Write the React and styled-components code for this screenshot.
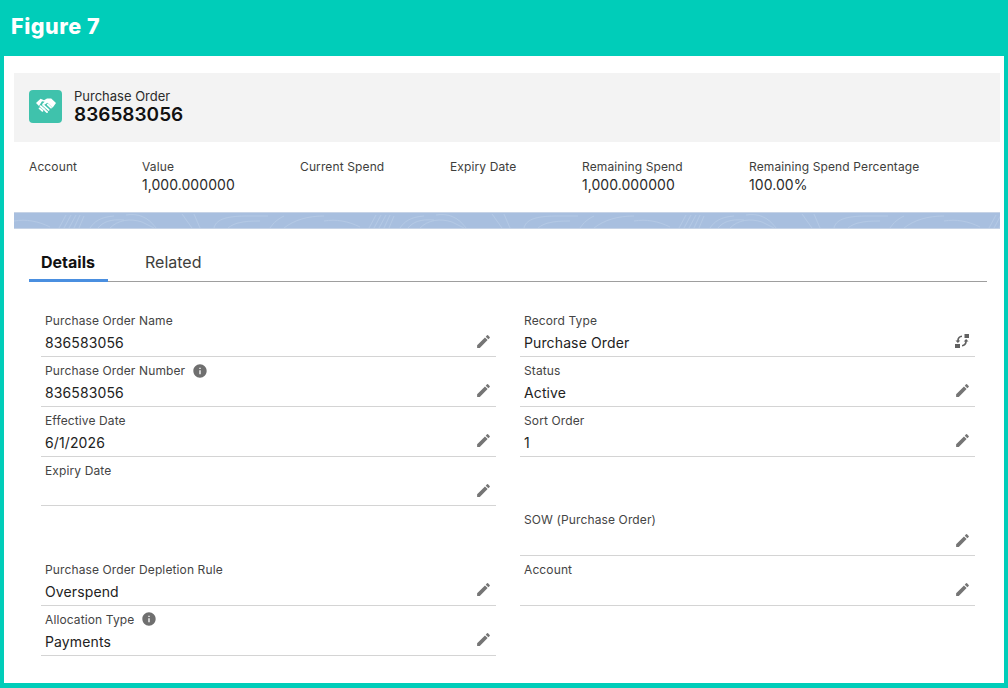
import React from 'react';
import styled, { createGlobalStyle } from 'styled-components';
import { MdEdit, MdInfo } from 'react-icons/md';

const GlobalStyle = createGlobalStyle`
  html, body {
    margin: 0;
    padding: 0;
    background: #00cdb9;
  }
  * {
    box-sizing: border-box;
  }
`;

const Frame = styled.div`
  width: 1008px;
  height: 688px;
  display: flex;
  flex-direction: column;
  padding: 0 4px 5px;
  background: #00cdb9;
  font-family: Inter, "Liberation Sans", sans-serif;
  overflow: hidden;
`;

const FigureBar = styled.div`
  height: 56px;
  flex: none;
  display: flex;
  align-items: flex-start;
  padding: 13px 0 0 7px;
  color: #fff;
  font-size: 21.5px;
  font-weight: 800;
  letter-spacing: 0.55px;
  line-height: 26px;
`;

const Sheet = styled.div`
  flex: 1;
  padding: 17px 4px 0 10px;
  background: #fff;
`;

const RecordHeader = styled.div`
  height: 69px;
  display: flex;
  align-items: center;
  gap: 12px;
  padding: 0 0 3px 15px;
  background: #f3f3f3;
`;

const RecordIcon = styled.div`
  width: 33px;
  height: 33px;
  display: flex;
  align-items: center;
  justify-content: center;
  border-radius: 4px;
  background: #3fc2ac;
`;

const RecordTitle = styled.div`
  display: flex;
  flex-direction: column;
  color: #2b2b2b;
  font-size: 13px;
  line-height: 16px;
  strong {
    color: #111;
    font-size: 19px;
    font-weight: 600;
    line-height: 21px;
  }
`;

const Highlights = styled.div`
  height: 70px;
  display: grid;
  grid-template-columns: 113px 158px 150px 132px 167px 1fr;
  padding: 17px 0 0 15px;
`;

const Stat = styled.div`
  display: flex;
  flex-direction: column;
  gap: 2px;
  color: #3e3e3c;
  font-size: 12px;
  letter-spacing: 0.12px;
  line-height: 15px;
  span:last-child:not(:first-child) {
    font-size: 14px;
    letter-spacing: 0.05px;
    line-height: 18px;
    color: #2b2b2b;
  }
`;

const Band = styled.div`
  height: 17px;
  background: #a8bfdf;
  border-top: 1px solid #c6d3e6;
  border-bottom: 1px solid #c6d3e6;
  overflow: hidden;
  svg {
    display: block;
    margin-top: -1px;
  }
`;

const Tabs = styled.div`
  height: 53px;
  margin: 0 13px 0 15px;
  display: flex;
  align-items: flex-end;
  border-bottom: 1px solid #9e9e9e;
`;

const Tab = styled.div`
  height: 32px;
  width: ${(p) => p.$width}px;
  margin-bottom: -1px;
  padding-left: ${(p) => p.$pad}px;
  border-bottom: 3px solid ${(p) => (p.$active ? '#4a8fe0' : 'transparent')};
  color: ${(p) => (p.$active ? '#111' : '#3e3e3c')};
  font-size: 16px;
  font-weight: ${(p) => (p.$active ? 700 : 400)};
  line-height: 24px;
`;

const FieldGrid = styled.div`
  display: grid;
  grid-template-columns: 455px 455px;
  grid-auto-rows: 49.75px;
  column-gap: 24px;
  padding: 25.4px 0 0 27px;
`;

const Field = styled.div`
  position: relative;
  padding: 6px 4px 0;
  border-bottom: ${(p) => (p.$blank ? 'none' : '1px solid #d4d4d4')};
`;

const Label = styled.div`
  display: flex;
  align-items: center;
  gap: 7px;
  height: 15px;
  color: #444;
  font-size: 12px;
  letter-spacing: 0.12px;
  line-height: 15px;
`;

const Value = styled.div`
  height: 20px;
  margin-top: 5px;
  color: #222;
  font-size: 14px;
  letter-spacing: 0.12px;
  line-height: 20px;
`;

const EditSlot = styled.span`
  position: absolute;
  right: 4px;
  bottom: 6px;
  width: 18px;
  height: 18px;
  display: flex;
  align-items: center;
  justify-content: center;
  color: #757575;
`;

const HandshakeIcon = () => (
  <svg width="20" height="16" viewBox="0 0 20 16">
    <path fill="#fff" d="M0 5 4.6.8 8 2.2 11 .4h4.2L20 5l-3.4 4.7-5.2-4.9-2.6 1.7c-1 .5-2 .2-2.6-.6l2.4-2.2L6 3.2 3 7.9z" />
    <path stroke="#fff" strokeWidth="1.9" strokeLinecap="round" fill="none" d="M4.6 8.2l4.2 3.6M7 6.9l5.6 5M3.6 10.4l2.8 2.4M9.4 12.6l1.6 1.4M11.8 6.6l3.2 3" />
  </svg>
);

const SwitchIcon = () => (
  <svg width="16" height="16" viewBox="0 0 16 16" fill="#616161">
    <rect x="10.5" y="1" width="4.5" height="4" />
    <rect x="1" y="11" width="5" height="4" />
    <path d="M8 2.4v1.7C6 4.3 5 5.4 4.8 7.4h1.5L3.9 10 1.5 7.4h1.6C3.3 4.5 5 2.7 8 2.4z" />
    <path d="M8 13.6v-1.7c2-.2 3-1.3 3.2-3.3H9.7L12.1 6l2.4 2.6h-1.6c-.2 2.9-1.9 4.7-4.9 5z" />
  </svg>
);

const BandTexture = () => (
  <svg width="986" height="17" viewBox="0 0 986 17">
    <defs>
      <pattern id="contours" width="310" height="17" patternUnits="userSpaceOnUse">
        <path
          fill="none"
          stroke="#b7cbe6"
          strokeWidth="0.8"
          d="M45 16 52 3M50 16 57 3M55 16 62 3M60 16 66 3M65 16 70 4M76 16c4-6 10-11 24-12M84 16c5-6 12-9 26-8M96 16c8-8 20-10 32-6l12 6M112 3c12-2 22 2 30 13M168 2l10 14M180 2l6 14M200 16c2-8 10-12 34-12h20M214 16c6-5 14-7 32-7M256 16c4-6 8-9 14-12M270 16c10-8 24-12 40-12M0 9c12-2 24 0 36 6"
        />
      </pattern>
    </defs>
    <rect width="986" height="17" fill="url(#contours)" />
  </svg>
);

const fields = [
  { label: 'Purchase Order Name', value: '836583056' },
  { label: 'Record Type', value: 'Purchase Order', swap: true },
  { label: 'Purchase Order Number', value: '836583056', info: true },
  { label: 'Status', value: 'Active' },
  { label: 'Effective Date', value: '6/1/2026' },
  { label: 'Sort Order', value: '1' },
  { label: 'Expiry Date', value: '' },
  { blank: true },
  { blank: true },
  { label: 'SOW (Purchase Order)', value: '' },
  { label: 'Purchase Order Depletion Rule', value: 'Overspend' },
  { label: 'Account', value: '' },
  { label: 'Allocation Type', value: 'Payments', info: true },
];

const stats = [
  ['Account'],
  ['Value', '1,000.000000'],
  ['Current Spend'],
  ['Expiry Date'],
  ['Remaining Spend', '1,000.000000'],
  ['Remaining Spend Percentage', '100.00%'],
];

const App = () => (
  <Frame>
    <GlobalStyle />
    <FigureBar>Figure 7</FigureBar>
    <Sheet>
      <RecordHeader>
        <RecordIcon>
          <HandshakeIcon />
        </RecordIcon>
        <RecordTitle>
          <span>Purchase Order</span>
          <strong>836583056</strong>
        </RecordTitle>
      </RecordHeader>
      <Highlights>
        {stats.map(([label, value]) => (
          <Stat key={label}>
            <span>{label}</span>
            {value && <span>{value}</span>}
          </Stat>
        ))}
      </Highlights>
      <Band>
        <BandTexture />
      </Band>
      <Tabs>
        <Tab $active $width={79} $pad={12}>Details</Tab>
        <Tab $width={110} $pad={37}>Related</Tab>
      </Tabs>
      <FieldGrid>
        {fields.map((field, i) =>
          field.blank ? (
            <Field key={i} $blank />
          ) : (
            <Field key={i}>
              <Label>
                {field.label}
                {field.info && <MdInfo size={16} color="#6f6f6f" />}
              </Label>
              <Value>{field.value}</Value>
              <EditSlot>{field.swap ? <SwitchIcon /> : <MdEdit size={17} />}</EditSlot>
            </Field>
          )
        )}
      </FieldGrid>
    </Sheet>
  </Frame>
);

export default App;
